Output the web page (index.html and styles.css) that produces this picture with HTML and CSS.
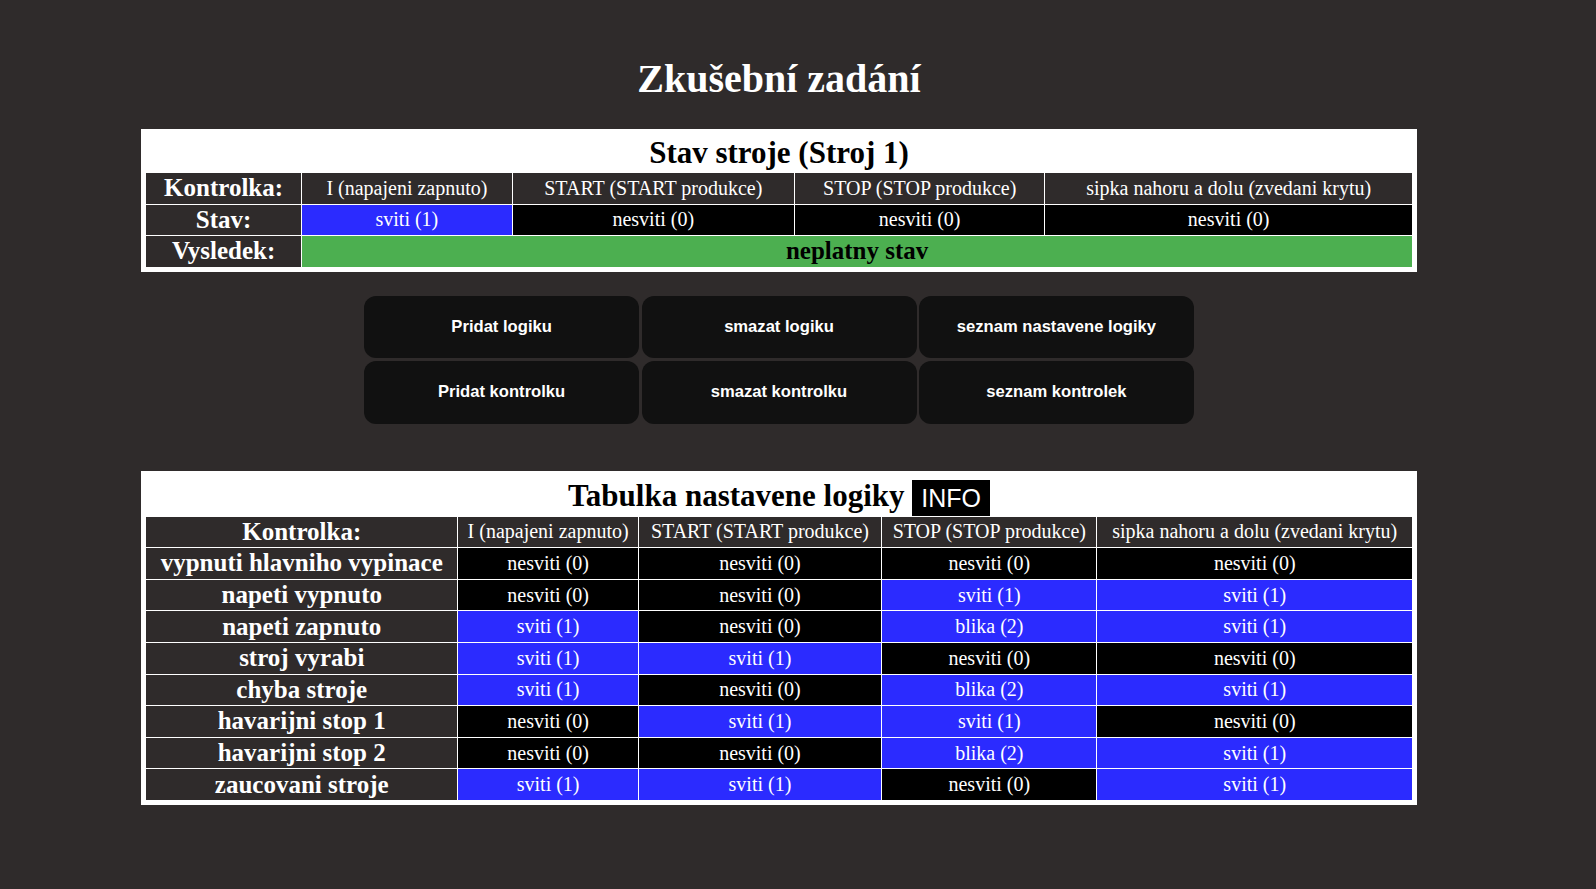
FILE: index.html
```html
<!DOCTYPE html>
<html lang="cs">
<head>
<meta charset="utf-8">
<title>Zkušební zadání</title>
<link rel="stylesheet" href="styles.css">
</head>
<body>
<div class="page">
  <h1 class="title">Zkušební zadání</h1>

  <section class="panel">
    <div class="panel-title">Stav stroje (Stroj 1)</div>
    <table class="grid">
      <colgroup>
        <col class="s1"><col class="s2"><col class="s3"><col class="s4"><col class="s5">
      </colgroup>
      <tr>
        <th class="rowhead">Kontrolka:</th>
        <th class="colhead">I (napajeni zapnuto)</th>
        <th class="colhead">START (START produkce)</th>
        <th class="colhead">STOP (STOP produkce)</th>
        <th class="colhead">sipka nahoru a dolu (zvedani krytu)</th>
      </tr>
      <tr>
        <th class="rowhead">Stav:</th>
        <td class="on">sviti (1)</td>
        <td class="off">nesviti (0)</td>
        <td class="off">nesviti (0)</td>
        <td class="off">nesviti (0)</td>
      </tr>
      <tr>
        <th class="rowhead">Vysledek:</th>
        <td class="result" colspan="4">neplatny stav</td>
      </tr>
    </table>
  </section>

  <div class="actions">
    <button class="btn">Pridat logiku</button>
    <button class="btn">smazat logiku</button>
    <button class="btn">seznam nastavene logiky</button>
    <button class="btn">Pridat kontrolku</button>
    <button class="btn">smazat kontrolku</button>
    <button class="btn">seznam kontrolek</button>
  </div>

  <section class="panel">
    <div class="panel-title panel-title-info">Tabulka nastavene logiky <span class="info">INFO</span></div>
    <table class="grid">
      <colgroup>
        <col class="l1"><col class="l2"><col class="l3"><col class="l4"><col class="l5">
      </colgroup>
      <tr>
        <th class="rowhead">Kontrolka:</th>
        <th class="colhead">I (napajeni zapnuto)</th>
        <th class="colhead">START (START produkce)</th>
        <th class="colhead">STOP (STOP produkce)</th>
        <th class="colhead">sipka nahoru a dolu (zvedani krytu)</th>
      </tr>
      <tr>
        <th class="rowhead">vypnuti hlavniho vypinace</th>
        <td class="off">nesviti (0)</td><td class="off">nesviti (0)</td><td class="off">nesviti (0)</td><td class="off">nesviti (0)</td>
      </tr>
      <tr>
        <th class="rowhead">napeti vypnuto</th>
        <td class="off">nesviti (0)</td><td class="off">nesviti (0)</td><td class="on">sviti (1)</td><td class="on">sviti (1)</td>
      </tr>
      <tr>
        <th class="rowhead">napeti zapnuto</th>
        <td class="on">sviti (1)</td><td class="off">nesviti (0)</td><td class="on">blika (2)</td><td class="on">sviti (1)</td>
      </tr>
      <tr>
        <th class="rowhead">stroj vyrabi</th>
        <td class="on">sviti (1)</td><td class="on">sviti (1)</td><td class="off">nesviti (0)</td><td class="off">nesviti (0)</td>
      </tr>
      <tr>
        <th class="rowhead">chyba stroje</th>
        <td class="on">sviti (1)</td><td class="off">nesviti (0)</td><td class="on">blika (2)</td><td class="on">sviti (1)</td>
      </tr>
      <tr>
        <th class="rowhead">havarijni stop 1</th>
        <td class="off">nesviti (0)</td><td class="on">sviti (1)</td><td class="on">sviti (1)</td><td class="off">nesviti (0)</td>
      </tr>
      <tr>
        <th class="rowhead">havarijni stop 2</th>
        <td class="off">nesviti (0)</td><td class="off">nesviti (0)</td><td class="on">blika (2)</td><td class="on">sviti (1)</td>
      </tr>
      <tr>
        <th class="rowhead">zaucovani stroje</th>
        <td class="on">sviti (1)</td><td class="on">sviti (1)</td><td class="off">nesviti (0)</td><td class="on">sviti (1)</td>
      </tr>
    </table>
  </section>
</div>
</body>
</html>
```

FILE: styles.css
```css
html, body {
  margin: 0;
  padding: 0;
  background: #2f2b2b;
  color: #fff;
  font-family: "Liberation Serif", "Times New Roman", serif;
}

.page {
  width: 1558px;
  display: flex;
  flex-direction: column;
  align-items: center;
  padding-top: 56px;
}

.title {
  margin: 0;
  font-size: 40px;
  line-height: 46px;
  font-weight: bold;
  color: #fff;
}

.panel {
  margin-top: 27px;
  width: 1276px;
  box-sizing: border-box;
  background: #fff;
  padding: 4px;
}

.panel-title {
  color: #000;
  font-weight: bold;
  font-size: 31px;
  line-height: 39px;
  text-align: center;
}

.panel-title-info {
  line-height: 41px;
}

.info {
  display: inline-block;
  vertical-align: top;
  margin-top: 5px;
  background: #000;
  color: #fff;
  font-family: "Liberation Sans", Arial, sans-serif;
  font-weight: normal;
  font-size: 25px;
  line-height: 28px;
  padding: 4px 9px 4px 9px;
}

.grid {
  width: 100%;
  table-layout: fixed;
  border-collapse: separate;
  border-spacing: 1px;
}

.s1 { width: 155px; }
.s2 { width: 209px; }
.s3 { width: 281px; }
.s4 { width: 249px; }
.s5 { width: 366px; }

.l1 { width: 311px; }
.l2 { width: 179px; }
.l3 { width: 242px; }
.l4 { width: 214px; }
.l5 { width: 314px; }

.grid th,
.grid td {
  height: 30.6px;
  padding: 0;
  text-align: center;
  vertical-align: middle;
  white-space: nowrap;
  color: #fff;
}

.rowhead {
  background: #2f2b2b;
  font-size: 25px;
  font-weight: bold;
}

.colhead {
  background: #2f2b2b;
  font-size: 20px;
  font-weight: normal;
}

.grid td {
  font-size: 20px;
}

.grid td.on {
  background: #2b2bff;
}

.grid td.off {
  background: #000;
}

.grid td.result {
  background: #4caf50;
  color: #000;
  font-weight: bold;
  font-size: 25px;
}

.actions {
  margin-top: 24px;
  display: grid;
  grid-template-columns: repeat(3, 275px);
  grid-auto-rows: 62.7px;
  gap: 2.4px;
}

.btn {
  border: none;
  border-radius: 12px;
  background: #111;
  color: #fff;
  font-family: "Liberation Sans", Arial, sans-serif;
  font-weight: bold;
  font-size: 16.6px;
  padding: 0;
  margin: 0;
}

.actions + .panel {
  margin-top: 47px;
}
```
